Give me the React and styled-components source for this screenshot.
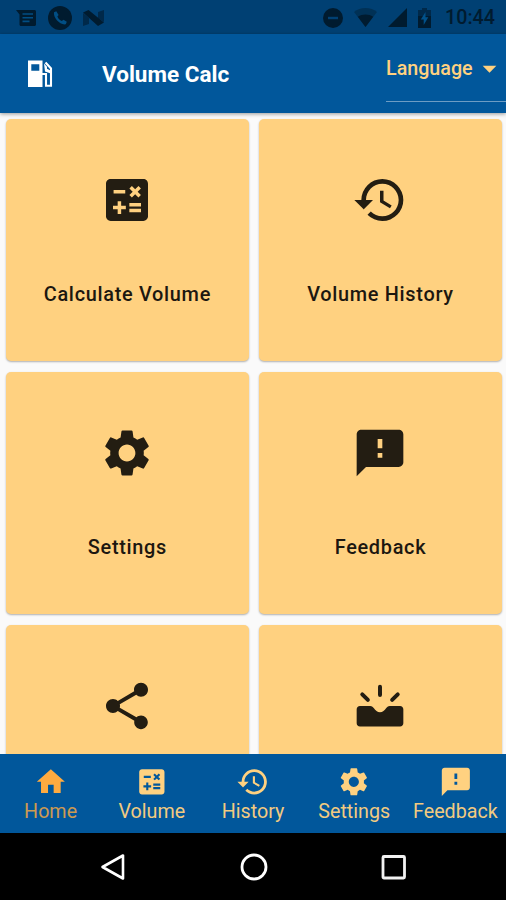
import React from "react";
import styled, { createGlobalStyle } from "styled-components";
import {
  MdCalculate,
  MdHistory,
  MdSettings,
  MdFeedback,
  MdShare,
  MdHome,
  MdArrowDropDown,
} from "react-icons/md";

const GlobalStyle = createGlobalStyle`
  * {
    box-sizing: border-box;
  }

  body {
    margin: 0;
    font-family: Roboto, sans-serif;
    background: #000;
  }

  svg {
    display: block;
    flex: none;
  }
`;

const Screen = styled.div`
  width: 506px;
  height: 900px;
  display: flex;
  flex-direction: column;
  overflow: hidden;
  background: #fafafa;
`;

const StatusBar = styled.div`
  height: 34px;
  flex: none;
  display: flex;
  align-items: center;
  justify-content: space-between;
  padding: 1px 11px 0 16px;
  background: #004073;
  color: #001b2f;
`;

const StatusGroup = styled.div`
  display: flex;
  align-items: center;
  gap: ${(props) => props.$gap};
`;

const Clock = styled.span`
  font-size: 19.7px;
  font-weight: 500;
  line-height: 24px;
  margin-left: 3px;
  padding-top: 1px;
`;

const AppBar = styled.header`
  height: 79px;
  flex: none;
  display: flex;
  background: #01579b;
  box-shadow: 0 1px 4px rgba(0, 0, 0, 0.4);
  z-index: 1;
`;

const Leading = styled.div`
  width: 102px;
  padding: 26px 0 0 28px;
`;

const Title = styled.h1`
  flex: 1;
  margin: 0;
  color: #fff;
  font-size: 22.5px;
  font-weight: 700;
  line-height: 80px;
`;

const LanguageSelect = styled.div`
  width: 120px;
  height: 68px;
  display: flex;
  align-items: center;
  justify-content: space-between;
  padding-top: 2px;
  border-bottom: 1px solid #6c9cc4;
  color: #ffd180;
  font-size: 19.7px;
  font-weight: 500;
`;

const Grid = styled.main`
  flex: 1;
  min-height: 0;
  overflow: hidden;
  display: grid;
  grid-template-columns: 242.4px 242.4px;
  grid-auto-rows: 242.4px;
  gap: 10.7px;
  padding: 5.8px 0 0 6.2px;
`;

const Card = styled.div`
  display: flex;
  flex-direction: column;
  align-items: center;
  padding-top: 53px;
  border-radius: 5px;
  background: #ffd180;
  box-shadow: 0 1px 2px rgba(0, 0, 0, 0.3);
  color: #231d12;
`;

const CardLabel = styled.span`
  margin-top: 55px;
  color: #1c1710;
  font-size: 19.9px;
  font-weight: 500;
  line-height: 24px;
  letter-spacing: 0.7px;
`;

const BottomNav = styled.nav`
  height: 79px;
  flex: none;
  display: grid;
  grid-template-columns: repeat(5, 1fr);
  background: #01579b;
  z-index: 1;
`;

const NavItem = styled.div`
  display: flex;
  flex-direction: column;
  align-items: center;
  padding-top: 11px;
  color: ${(props) => (props.$active ? "#ffab40" : "#ffd180")};
`;

const NavLabel = styled.span`
  margin-top: 1px;
  font-size: 19.7px;
  line-height: 24px;
  opacity: ${(props) => (props.$active ? 0.8 : 0.95)};
`;

const SystemBar = styled.div`
  height: 67px;
  flex: none;
  display: flex;
  justify-content: center;
  align-items: center;
  gap: 112.5px;
  padding-left: 1px;
  background: #000;
`;

const FuelIcon = () => (
  <svg width="25" height="28" viewBox="0 0 25 28">
    <path
      fill="#fff"
      fillRule="evenodd"
      d="M0 0.500h14.500v26.500H0zM3.300 4.200v6.500h8V4.200z"
    />
    <path
      fill="none"
      stroke="#fff"
      strokeWidth="2.100"
      d="M14 14h4v11.700h5V8.500l-5.500-6"
    />
    <path fill="#fff" d="M16 3.500l3 3.200v2l3 1.500v3L17 11.500z" />
  </svg>
);

const InboxIcon = ({ size }) => (
  <svg width={size} height={size} viewBox="0 0 24 24" fill="currentColor">
    <path d="M3.400 12h4.400c.8 0 1.200.4 1.600 1 .6 1 1.500 1.700 2.600 1.700s2-.7 2.600-1.700c.4-.6.8-1 1.600-1h4.400c.8 0 1.400.6 1.400 1.400v6c0 .8-.6 1.400-1.400 1.400H3.400c-.8 0-1.400-.6-1.400-1.400v-6c0-.8.6-1.400 1.400-1.400z" />
    <path
      fill="none"
      stroke="currentColor"
      strokeWidth="1.700"
      strokeLinecap="round"
      d="M12 3.700v3.600M4.400 7l2.400 2.400M19.600 7l-2.400 2.400"
    />
  </svg>
);

const MessagesIcon = () => (
  <svg width="21" height="18" viewBox="0 0 21 18">
    <path fill="currentColor" d="M0 1h18.500C19.300 1 20 1.600 20 2.500v13c0 .8-.7 1.500-1.500 1.500H5c-.9 0-1.500-.7-1.500-1.500V5.500z" />
    <path stroke="#004e84" strokeWidth="1.600" d="M6.500 5h10.500M6.500 8.700h10.500M6.500 12.400h7" />
  </svg>
);

const PhoneIcon = () => (
  <svg width="24" height="24" viewBox="0 0 24 24">
    <circle cx="12" cy="12" r="12" fill="currentColor" />
    <path
      fill="#004e84"
      d="M8.300 5.200 6 6.300C5 11.500 12 19.500 17.800 18.300l1-2.600-3.300-2-1.700 1.400c-2-.9-3.700-2.700-4.400-4.600l1.200-1.600z"
    />
  </svg>
);

const NougatIcon = () => (
  <svg width="21" height="16" viewBox="0 0 21 16">
    <path fill="#00294a" d="M0 3l6 5v6l-6 2zM15 2l6-2v12l-6-4z" />
    <path fill="currentColor" d="M0 2.500 5.500 0 21 12.500 15 16z" />
  </svg>
);

const BlockIcon = () => (
  <svg width="20" height="20" viewBox="0 0 20 20">
    <circle cx="10" cy="10" r="10" fill="currentColor" />
    <path fill="#004073" d="M5 8.800h10v2.400H5z" />
  </svg>
);

const WifiIcon = () => (
  <svg width="23" height="19" viewBox="0 0 23 19">
    <path fill="#003156" d="M0 4C6-1.300 17-1.300 23 4L11.500 19z" />
    <path fill="currentColor" d="M3.800 8.800c4.500-3 10.900-3 15.400 0L11.500 19z" />
  </svg>
);

const SignalIcon = () => (
  <svg width="19" height="19" viewBox="0 0 19 19">
    <path fill="currentColor" d="M19 0v19H0z" />
  </svg>
);

const BatteryIcon = () => (
  <svg width="13" height="20" viewBox="0 0 13 20">
    <path fill="#00294a" d="M4 0h5v2h4v8H0V2h4z" />
    <path fill="currentColor" d="M0 8h13v12H0z" />
    <path fill="#00518a" d="M7.500 4 2.800 11.500h2.900V17l4.600-7.700H7.500z" />
  </svg>
);

const cards = [
  { label: "Calculate Volume", icon: MdCalculate },
  { label: "Volume History", icon: MdHistory },
  { label: "Settings", icon: MdSettings },
  { label: "Feedback", icon: MdFeedback },
  { label: "", icon: MdShare },
  { label: "", icon: InboxIcon },
];

const navItems = [
  { label: "Home", icon: MdHome, active: true },
  { label: "Volume", icon: MdCalculate },
  { label: "History", icon: MdHistory },
  { label: "Settings", icon: MdSettings },
  { label: "Feedback", icon: MdFeedback },
];

const App = () => {
  return (
    <>
      <GlobalStyle />
      <Screen>
        <StatusBar>
          <StatusGroup $gap="11px">
            <MessagesIcon />
            <PhoneIcon />
            <NougatIcon />
          </StatusGroup>
          <StatusGroup $gap="11px">
            <BlockIcon />
            <WifiIcon />
            <SignalIcon />
            <BatteryIcon />
            <Clock>10:44</Clock>
          </StatusGroup>
        </StatusBar>

        <AppBar>
          <Leading>
            <FuelIcon />
          </Leading>
          <Title>Volume Calc</Title>
          <LanguageSelect>
            Language
            <MdArrowDropDown size={33} />
          </LanguageSelect>
        </AppBar>

        <Grid>
          {cards.map(({ label, icon: Icon }, index) => (
            <Card key={index}>
              <Icon size={56} />
              <CardLabel>{label}</CardLabel>
            </Card>
          ))}
        </Grid>

        <BottomNav>
          {navItems.map(({ label, icon: Icon, active }) => (
            <NavItem key={label} $active={active}>
              <Icon size={33.7} />
              <NavLabel $active={active}>{label}</NavLabel>
            </NavItem>
          ))}
        </BottomNav>

        {/* Android system buttons */}
        <SystemBar>
          <svg width="28" height="28" viewBox="0 0 28 28">
            <path
              d="M3.500 14 24 2.500v23z"
              fill="none"
              stroke="#fff"
              strokeWidth="2.600"
              strokeLinejoin="round"
            />
          </svg>
          <svg width="28" height="28" viewBox="0 0 28 28">
            <circle cx="14" cy="14" r="12" fill="none" stroke="#fff" strokeWidth="2.800" />
          </svg>
          <svg width="28" height="28" viewBox="0 0 28 28">
            <rect x="3" y="3.500" width="21.500" height="21.500" rx="1" fill="none" stroke="#f2f2f2" strokeWidth="2.800" />
          </svg>
        </SystemBar>
      </Screen>
    </>
  );
};

export default App;
